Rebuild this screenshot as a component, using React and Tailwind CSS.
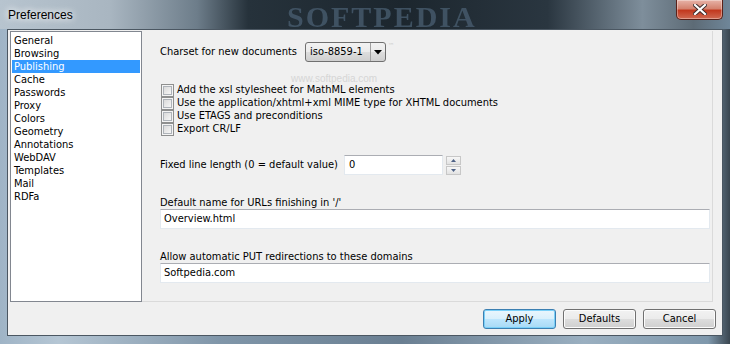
import React from "react";

const categories = [
  "General",
  "Browsing",
  "Publishing",
  "Cache",
  "Passwords",
  "Proxy",
  "Colors",
  "Geometry",
  "Annotations",
  "WebDAV",
  "Templates",
  "Mail",
  "RDFa",
];

const checks = [
  "Add the xsl stylesheet for MathML elements",
  "Use the application/xhtml+xml MIME type for XHTML documents",
  "Use ETAGS and preconditions",
  "Export CR/LF",
];

function Checkbox({ label }) {
  return (
    <div className="flex items-center h-[13px]">
      <div className="ml-px w-[13px] h-[13px] border border-[#8e8f8f] bg-[#f4f4f4] p-px">
        <div className="w-full h-full border border-[#aeb3b9] bg-[linear-gradient(135deg,#dadada,#f6f6f6)]" />
      </div>
      <span className="ml-[3px]">{label}</span>
    </div>
  );
}

function TextBox({ value, className = "" }) {
  return (
    <div
      className={`h-[20px] bg-white border border-[#e3e9ef] border-t-[#abadb3] flex items-center pl-[3px] ${className}`}
    >
      {value}
    </div>
  );
}

function Button({ children, primary }) {
  return (
    <button
      className={`w-[73px] h-[20px] rounded-[3px] border flex items-center justify-center ${
        primary
          ? "border-[#3c7fb1] bg-[linear-gradient(#eaf6fd_0%,#d9f0fc_50%,#bee6fd_51%,#a7d9f5_100%)] shadow-[inset_0_0_0_1px_#7ad0f8]"
          : "border-[#707070] bg-[linear-gradient(#f2f2f2_0%,#ebebeb_50%,#dddddd_51%,#cfcfcf_100%)] shadow-[inset_0_0_0_1px_#fcfcfc]"
      }`}
    >
      {children}
    </button>
  );
}

export default function App() {
  return (
    <div className="w-[730px] h-[344px] relative overflow-hidden flex flex-col bg-[linear-gradient(90deg,#9fb4c6_0%,#b5c6d4_8%,#8096a9_30%,#6a7f92_55%,#9aafc0_80%,#7f98ac_97%,#3a4650_100%)] font-['DejaVu_Sans_Condensed','Liberation_Sans',sans-serif] text-[11px] text-black">
      {/* title bar */}
      <div className="h-[29px] flex items-center relative bg-[linear-gradient(90deg,#b7c4cf_0%,#a9b6c1_15%,#6d7d8a_27%,#26323b_34%,#1c262e_55%,#2a3640_75%,#7e8e9b_88%,#5d6b76_95%,#6f8699_100%)]">
        <span className="ml-[8px] text-[12px] font-['Liberation_Sans',sans-serif] [text-shadow:0_0_6px_#ffffff,0_0_10px_#ffffff]">
          Preferences
        </span>
        <span className="absolute left-[287px] top-[2px] text-[30px] font-bold tracking-[2px] font-['Liberation_Serif',serif] text-[#4a5f72] opacity-75 leading-none blur-[0.6px]">
          SOFTPEDIA
        </span>
        <div className="absolute top-0 right-[7px] w-[47px] h-[20px] rounded-b-[5px] border border-t-0 border-[#5a2119] bg-[linear-gradient(#e7b3a8_0%,#d4826f_45%,#c2391f_55%,#d06a52_100%)] flex items-center justify-center shadow-[inset_0_0_0_1px_rgba(255,255,255,0.35)]">
          <svg width="14" height="11" viewBox="0 0 14 11">
            <path d="M2 1 L12 10 M12 1 L2 10" stroke="#3b2a2a" strokeWidth="4" strokeLinecap="square" />
            <path d="M2 1 L12 10 M12 1 L2 10" stroke="#ffffff" strokeWidth="2.2" strokeLinecap="square" />
          </svg>
        </div>
      </div>

      {/* client area */}
      <div className="flex-1 px-[7px] pb-[8px]">
        <div className="h-full border border-[#4b5762] bg-[#f0f0f0] flex flex-col relative">
          <div className="flex h-[272px] pt-px pl-[2px]">
            {/* category list */}
            <div className="w-[132px] h-full bg-white border border-[#828790] pt-[2px] pl-px">
              {categories.map((c) => (
                <div
                  key={c}
                  className={`h-[13px] leading-[13px] w-[128px] pl-[2px] ${
                    c === "Publishing" ? "bg-[#3399ff] text-white" : ""
                  }`}
                >
                  {c}
                </div>
              ))}
            </div>

            {/* settings panel */}
            <div className="flex-1 mr-[9px] border-r border-b border-[#dadada] pl-[18px] pt-[11px] relative">
              <div className="flex items-center h-[20px]">
                <span className="w-[145px]">Charset for new documents</span>
                <div className="w-[81px] h-[20px] rounded-[3px] border border-[#707070] bg-[linear-gradient(#f2f2f2_0%,#ebebeb_50%,#dddddd_51%,#cfcfcf_100%)] flex items-center">
                  <span className="flex-1 pl-[4px]">iso-8859-1</span>
                  <div className="w-[15px] h-full border-l border-[#a0a0a0] flex items-center justify-center">
                    <svg width="8" height="5" viewBox="0 0 8 5">
                      <path d="M0 0 H8 L4 4.5 Z" fill="#000" />
                    </svg>
                  </div>
                </div>
                <span className="ml-[2px] -mt-[12px] text-[7px] text-[#cfcfcf]">™</span>
              </div>

              <div className="mt-[22px] flex flex-col">
                {checks.map((c) => (
                  <Checkbox key={c} label={c} />
                ))}
              </div>

              <div className="mt-[19px] flex items-center h-[20px]">
                <span className="w-[184px]">Fixed line length (0 = default value)</span>
                <TextBox value="0" className="w-[99px] pl-[4px]" />
                <div className="ml-[3px] w-[15px] h-[20px] flex flex-col gap-px pt-px">
                  <div className="flex-1 border border-[#c7c7c7] bg-[linear-gradient(#f7f7f7,#e2e2e2)] flex items-center justify-center">
                    <svg width="5" height="3" viewBox="0 0 5 3">
                      <path d="M0 3 H5 L2.5 0 Z" fill="#4d6185" />
                    </svg>
                  </div>
                  <div className="flex-1 border border-[#c7c7c7] bg-[linear-gradient(#f7f7f7,#e2e2e2)] flex items-center justify-center">
                    <svg width="5" height="3" viewBox="0 0 5 3">
                      <path d="M0 0 H5 L2.5 3 Z" fill="#4d6185" />
                    </svg>
                  </div>
                </div>
              </div>

              <div className="mt-[21px] h-[13px] leading-[13px]">
                Default name for URLs finishing in '/'
              </div>
              <TextBox value="Overview.html" className="w-[550px]" />

              <div className="mt-[21px] h-[13px] leading-[13px]">
                Allow automatic PUT redirections to these domains
              </div>
              <TextBox value="Softpedia.com" className="w-[550px]" />

              <span className="absolute left-[149px] top-[40px] text-[10px] text-[#d6d6d6] font-['Liberation_Sans',sans-serif]">
                www.softpedia.com
              </span>
            </div>
          </div>

          {/* buttons */}
          <div className="flex-1 flex justify-end items-start pt-[7px] pr-[6px] gap-[7px]">
            <Button primary>Apply</Button>
            <Button>Defaults</Button>
            <Button>Cancel</Button>
          </div>
        </div>
      </div>
    </div>
  );
}
